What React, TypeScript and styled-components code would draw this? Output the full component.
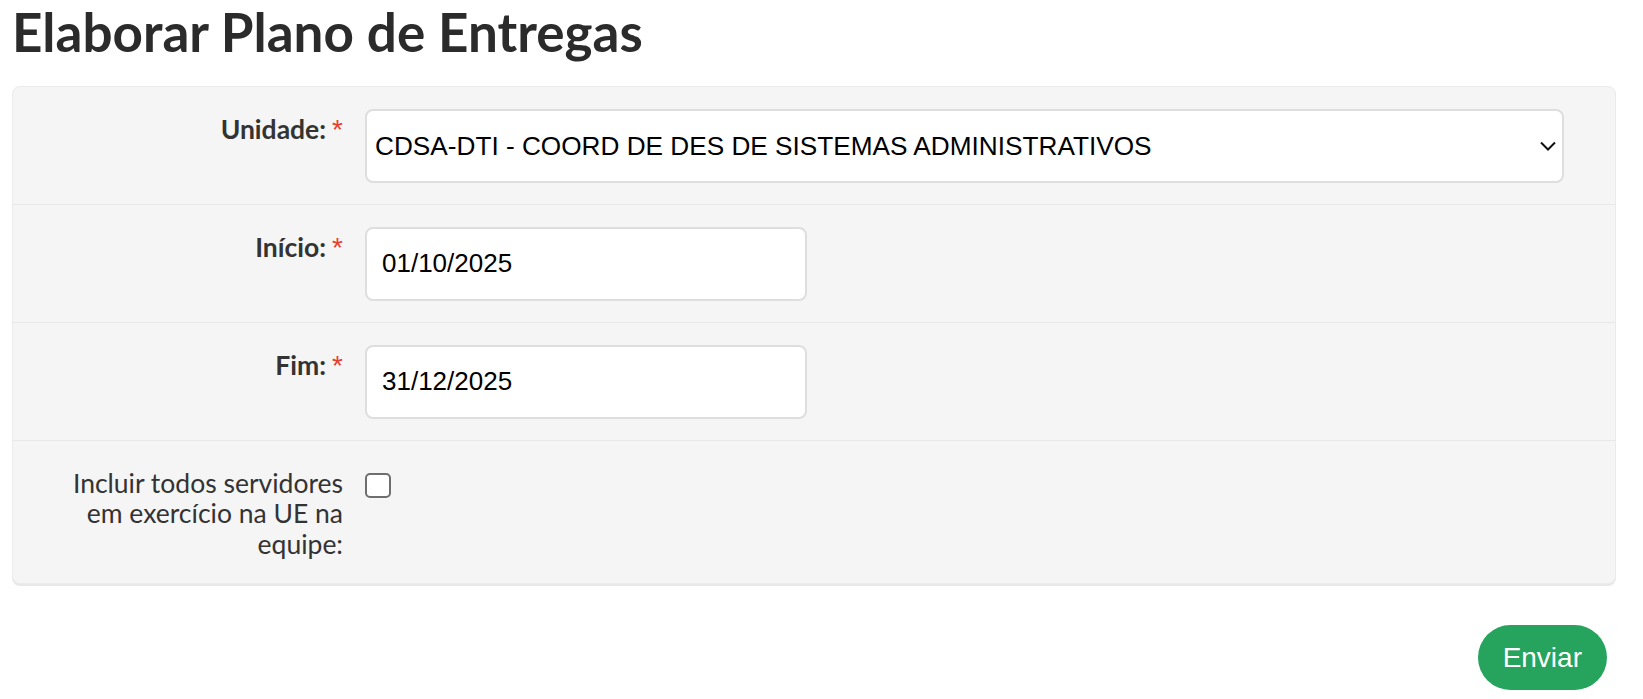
import React, { useState } from "react";
import styled, { createGlobalStyle } from "styled-components";

const GlobalStyle = createGlobalStyle`
  body {
    margin: 0;
    background: #ffffff;
    font-family: Lato, "Open Sans", sans-serif;
    color: #333333;
  }
`;

const Page = styled.div`
  padding: 0 27px 0 12px;
`;

const Title = styled.h1`
  margin: 0 0 22px;
  font: 700 53px/1.2 Lato, sans-serif;
  color: #2b2b2b;
`;

const Panel = styled.form`
  background: #f5f5f5;
  border: 1px solid #ebebeb;
  border-radius: 8px;
  box-shadow: 0 2px 0 #e8e8e8;
`;

const Row = styled.div<{ $last?: boolean }>`
  display: grid;
  grid-template-columns: 330px 1fr;
  column-gap: 22px;
  padding: 22px 51px ${(p) => (p.$last ? "24px" : "21px")} 0;
  border-bottom: ${(p) => (p.$last ? "none" : "1px solid #e8e8e8")};
`;

const Label = styled.label<{ $bold?: boolean }>`
  padding: 5px 0 0 40px;
  text-align: right;
  font: ${(p) => (p.$bold ? 700 : 400)} 26.5px/30.5px Lato, sans-serif;
  color: #333333;
`;

const Required = styled.span`
  display: inline-block;
  margin-left: 6px;
  padding-top: 6px;
  font: 400 28px/20px "Liberation Sans", Arial, sans-serif;
  color: #e5402f;
  vertical-align: top;
`;

const SelectWrap = styled.div`
  position: relative;
`;

const Select = styled.select`
  appearance: none;
  width: 100%;
  height: 74px;
  box-sizing: border-box;
  padding: 0 40px 0 8px;
  border: 2px solid #dedede;
  border-radius: 8px;
  background: #ffffff;
  font: 400 26.2px "Liberation Sans", Arial, sans-serif;
  color: #000000;
`;

const Chevron = styled.svg`
  position: absolute;
  right: 8px;
  top: 50%;
  width: 16px;
  height: 10px;
  margin-top: -5px;
  pointer-events: none;
`;

const DateInput = styled.input`
  width: 442px;
  height: 74px;
  box-sizing: border-box;
  padding: 0 15px;
  border: 2px solid #dedede;
  border-radius: 8px;
  background: #ffffff;
  font: 400 26px "Liberation Sans", Arial, sans-serif;
  color: #000000;
`;

const Checkbox = styled.input`
  appearance: none;
  display: block;
  width: 26px;
  height: 25px;
  margin: 10px 0 0;
  box-sizing: border-box;
  border: 2px solid #6e6e6e;
  border-radius: 5px;
  background: #ffffff;
  &:checked {
    background: #0d6efd;
    border-color: #0d6efd;
  }
`;

const Actions = styled.div`
  display: flex;
  justify-content: flex-end;
  padding: 41px 9px 0 0;
`;

const SubmitButton = styled.button`
  height: 65px;
  padding: 0 25px;
  border: none;
  border-radius: 33px;
  background: #26a35c;
  color: #ffffff;
  font: 400 28px "Liberation Sans", Arial, sans-serif;
  cursor: pointer;
`;

const App = () => {
  const [inicio, setInicio] = useState("01/10/2025");
  const [fim, setFim] = useState("31/12/2025");
  const [incluir, setIncluir] = useState(false);

  return (
    <Page>
      <GlobalStyle />
      <Title>Elaborar Plano de Entregas</Title>
      <Panel onSubmit={(e) => e.preventDefault()}>
        <Row>
          <Label $bold>
            Unidade:<Required>*</Required>
          </Label>
          <SelectWrap>
            <Select defaultValue="cdsa">
              <option value="cdsa">
                CDSA-DTI - COORD DE DES DE SISTEMAS ADMINISTRATIVOS
              </option>
            </Select>
            <Chevron viewBox="0 0 16 10" fill="none">
              <path d="M1 1.5l7 7 7-7" stroke="#111" strokeWidth="2" />
            </Chevron>
          </SelectWrap>
        </Row>
        <Row>
          <Label $bold>
            Início:<Required>*</Required>
          </Label>
          <div>
            <DateInput value={inicio} onChange={(e) => setInicio(e.target.value)} />
          </div>
        </Row>
        <Row>
          <Label $bold>
            Fim:<Required>*</Required>
          </Label>
          <div>
            <DateInput value={fim} onChange={(e) => setFim(e.target.value)} />
          </div>
        </Row>
        <Row $last>
          <Label>Incluir todos servidores em exercício na UE na equipe:</Label>
          <div>
            <Checkbox
              type="checkbox"
              checked={incluir}
              onChange={(e) => setIncluir(e.target.checked)}
            />
          </div>
        </Row>
      </Panel>
      <Actions>
        <SubmitButton type="submit">Enviar</SubmitButton>
      </Actions>
    </Page>
  );
};

export default App;
